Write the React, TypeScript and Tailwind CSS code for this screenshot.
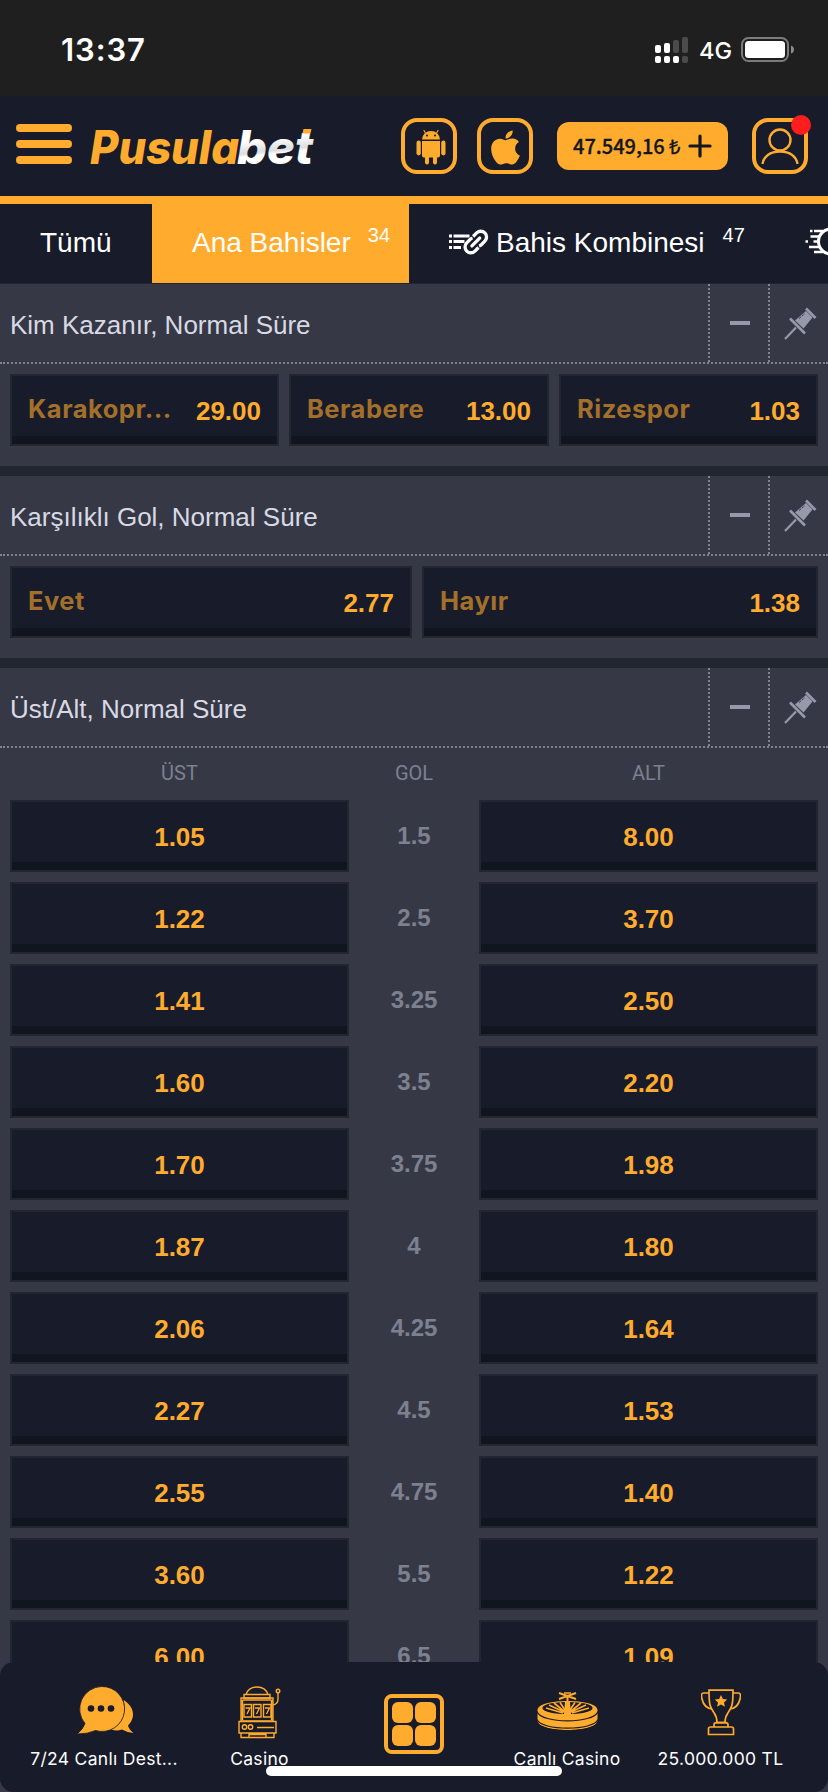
import type { ReactNode } from 'react'
import { FaApple } from 'react-icons/fa'

const winner = [
  { name: 'Karakopr...', odd: '29.00' },
  { name: 'Berabere', odd: '13.00' },
  { name: 'Rizespor', odd: '1.03' },
]

const bothScore = [
  { name: 'Evet', odd: '2.77' },
  { name: 'Hayır', odd: '1.38' },
]

const totals = [
  ['1.05', '1.5', '8.00'],
  ['1.22', '2.5', '3.70'],
  ['1.41', '3.25', '2.50'],
  ['1.60', '3.5', '2.20'],
  ['1.70', '3.75', '1.98'],
  ['1.87', '4', '1.80'],
  ['2.06', '4.25', '1.64'],
  ['2.27', '4.5', '1.53'],
  ['2.55', '4.75', '1.40'],
  ['3.60', '5.5', '1.22'],
  ['6.00', '6.5', '1.09'],
]

function StatusBar() {
  return (
    <div className="flex h-24 shrink-0 items-start bg-[#1f1f1f] text-white font-['Inter',sans-serif]">
      <span className="ml-[61px] mt-[32px] w-[594px] text-[31px] leading-[36px] font-semibold tracking-[0.9px]">13:37</span>
      <svg className="mt-[37px] h-[26px] w-[33px]" viewBox="0 0 33 26">
        <g fill="#fff">
          <rect x="0" y="8" width="6" height="8" rx="2" />
          <rect x="9" y="6" width="6" height="10" rx="2" />
          <rect x="0" y="19" width="6" height="7" rx="2" />
          <rect x="9" y="19" width="6" height="7" rx="2" />
          <rect x="18" y="19" width="6" height="7" rx="2" />
        </g>
        <g fill="#4b4b4b">
          <rect x="18" y="3" width="6" height="13" rx="2" />
          <rect x="27" y="0" width="6" height="16" rx="2" />
          <rect x="27" y="19" width="6" height="7" rx="2" />
        </g>
      </svg>
      <span className="ml-[11px] mt-[37px] w-[42px] text-[23.500px] leading-[28px] font-medium">4G</span>
      <svg className="mt-[37px] h-[25px] w-[54px]" viewBox="0 0 54 25">
        <rect x="1" y="1" width="46" height="23" rx="6.5" fill="none" stroke="#7b7b7b" strokeWidth="2" />
        <rect x="4" y="4" width="40" height="17" rx="3.5" fill="#fff" />
        <path d="M50 8.500q3 1 3 4t-3 4z" fill="#8b8b8b" />
      </svg>
    </div>
  )
}

function Logo() {
  return (
    <svg className="ml-[18px] h-[70px] w-[232px] overflow-visible" viewBox="0 0 232 70">
      <defs>
        <linearGradient id="betFill" x1="0" y1="0" x2="0.15" y2="1">
          <stop offset="0.4" stopColor="#fff" />
          <stop offset="0.62" stopColor="#dcdde0" />
          <stop offset="0.68" stopColor="#fff" />
        </linearGradient>
      </defs>
      <g fontFamily="Inter, sans-serif" fontWeight="800" fontStyle="italic" fontSize="46">
        <text x="0" y="52" fill="#ffab2e" textLength="149" lengthAdjust="spacingAndGlyphs">Pusula</text>
        <text x="147" y="52" fill="url(#betFill)" textLength="76" lengthAdjust="spacingAndGlyphs">bet</text>
      </g>
      <path d="M213.500 17h8l-1 4.500h-8z" fill="#ffab2e" />
    </svg>
  )
}

function Header() {
  return (
    <header className="flex h-[108px] shrink-0 items-start border-b-8 border-[#ffab2e] bg-[#181b2a] pl-4">
      <div className="mt-7 flex w-14 flex-col gap-2">
        <span className="h-2 rounded-full bg-[#ffab2e]" />
        <span className="h-2 rounded-full bg-[#ffab2e]" />
        <span className="h-2 rounded-full bg-[#ffab2e]" />
      </div>
      <div className="mt-4 w-[329px]">
        <Logo />
      </div>
      <div className="mt-[22px] flex items-center">
        <div className="flex size-14 items-center justify-center rounded-[16px] border-4 border-[#ffab2e]">
          <svg className="mt-0.5 ml-1 h-[36px] w-[30px]" viewBox="0 0 30 36" fill="#ffab2e">
            <path d="M6 10.500a9 8.500 0 0 1 18 0z" />
            <path d="M9.500 4L7.700 1M20.500 4l1.800-3" stroke="#ffab2e" strokeWidth="1.100" />
            <circle cx="11" cy="6.600" r="1" fill="#181b2a" />
            <circle cx="19" cy="6.600" r="1" fill="#181b2a" />
            <path d="M6 12h18v14.500a2 2 0 0 1-2 2h-1v5a2 2 0 0 1-4 0v-5h-4v5a2 2 0 0 1-4 0v-5h-1a2 2 0 0 1-2-2z" />
            <rect x="0.500" y="11.500" width="4.300" height="15" rx="2.150" />
            <rect x="25.200" y="11.500" width="4.300" height="15" rx="2.150" />
          </svg>
        </div>
        <div className="ml-5 flex size-14 items-center justify-center rounded-[16px] border-4 border-[#ffab2e]">
          <FaApple className="mt-0.5 size-[39px] text-[#ffab2e]" />
        </div>
        <div className="ml-6 flex h-12 w-[171px] items-center rounded-[12px] bg-[#ffab2e] pl-4 text-[#141722]">
          <span className="w-[115px] whitespace-nowrap font-['Noto_Sans_CJK_SC',sans-serif] text-[20px] font-medium [-webkit-text-stroke:0.3px_#141722]">47.549,16 ₺</span>
          <svg className="size-6" viewBox="0 0 24 24" stroke="#141722" strokeWidth="3.200" strokeLinecap="round">
            <path d="M12 2v20M2 12h20" />
          </svg>
        </div>
        <div className="relative ml-6 flex size-14 items-center justify-center rounded-[16px] border-4 border-[#ffab2e]">
          <svg className="h-[36px] w-[38px]" viewBox="0 0 38 36" fill="none" stroke="#ffab2e" strokeWidth="2.400">
            <circle cx="19" cy="12" r="10.500" />
            <path d="M1.500 36C2.500 28.500 9 23.500 19 23.500S35.500 28.500 36.500 36" />
          </svg>
          <span className="absolute -top-[7px] -right-[7px] size-5 rounded-full bg-[#ff1d1d]" />
        </div>
      </div>
    </header>
  )
}

function ComboIcon() {
  return (
    <svg className="h-[30px] w-[40px] shrink-0" viewBox="0 0 40 30" fill="none" stroke="#fff">
      <path d="M0 9h3M4.500 9h16M0 14.500h3M4.500 14.500h11M0 20.500h3M4.500 20.500h7.500" strokeWidth="3.200" />
      <g transform="translate(-0.200 1.500) rotate(-45 27 13.500)" strokeWidth="3.300">
        <path d="M25 19.300H20a5.800 5.800 0 0 1 0-11.600h5a5.800 5.800 0 0 1 2.500.7" />
        <path d="M29 7.700H34a5.800 5.800 0 0 1 0 11.600h-5a5.800 5.800 0 0 1-2.500-.7" />
        <path d="M21.500 13.500h11" strokeLinecap="round" />
      </g>
    </svg>
  )
}

function Tabs() {
  return (
    <nav className="flex h-20 shrink-0 overflow-hidden border-b border-[#222530] bg-[#181b2a] text-[28px] leading-[32px] whitespace-nowrap text-white">
      <div className="w-[152px] shrink-0 pt-[23px] pl-10">Tümü</div>
      <div className="flex w-[257px] shrink-0 bg-[#ffab2e] pt-[23px] pl-10">
        Ana Bahisler
        <span className="-mt-[5px] ml-[17px] text-[20px] leading-[26px]">34</span>
      </div>
      <div className="flex w-[356px] shrink-0 pt-[23px] pl-10">
        <ComboIcon />
        <span className="ml-[7px]">Bahis Kombinesi</span>
        <span className="-mt-[5px] ml-[18px] text-[20px] leading-[26px]">47</span>
      </div>
      <div className="shrink-0 pt-[23px] pl-10">
        <svg className="h-[30px] w-[44px]" viewBox="0 0 44 30" fill="none" stroke="#fff" strokeWidth="3">
          <circle cx="26" cy="14.500" r="12.500" />
          <path d="M26 7.500v7l5 3M9 4h9M5.500 9.500h9M8.500 14.500h5M4 20h10M9 25h9M5 4h2.500M0.500 14.500H3" strokeWidth="2.600" />
        </svg>
      </div>
    </nav>
  )
}

function PinIcon() {
  return (
    <svg className="h-[33px] w-[33px]" viewBox="0 0 33 33" fill="none" stroke="#9599aa">
      <path d="M1 32L12 20.500" strokeWidth="2.200" />
      <path d="M6 11.500L21 26.500" strokeWidth="2.600" />
      <path d="M22 1.500L31.500 11" strokeWidth="2.600" />
      <path d="M11 13.500L22 4L28.500 10.500L19.500 21.500z" fill="#9599aa" stroke="none" />
      <path d="M15 11.500l6-5" stroke="#363945" strokeWidth="1" strokeDasharray="2.500 1" />
    </svg>
  )
}

function Market({ title, children }: { title: string; children: ReactNode }) {
  return (
    <section className="shrink-0 border-b-[10px] border-[#222631] bg-[#363945]">
      <div className="flex h-20 border-b-2 border-dotted border-[#818391]">
        <h2 className="w-[708px] pt-[25px] pl-[10px] text-[26px] leading-[32px] text-[#d9d9e6]">{title}</h2>
        <div className="w-[60px] border-l-2 border-dotted border-[#818391] pt-[37px] pl-5">
          <div className="h-1 w-5 bg-[#9599aa]" />
        </div>
        <div className="w-[60px] border-l-2 border-dotted border-[#818391] pt-[23px] pl-[14px]">
          <PinIcon />
        </div>
      </div>
      {children}
    </section>
  )
}

function Outcome({ name, odd }: { name: string; odd: string }) {
  return (
    <div className="flex h-[72px] items-start justify-between border-2 border-[#222631] bg-[#181b2a] px-4 pt-[17px] font-bold shadow-[inset_0_-8px_0_#11151f]">
      <span className="font-['Inter',sans-serif] text-[25.500px] leading-[32px] tracking-[0.5px] text-[#a3702c]">{name}</span>
      <span className="pt-[2px] text-[26px] leading-[32px] text-[#ffab2e]">{odd}</span>
    </div>
  )
}

function Price({ value }: { value: string }) {
  return (
    <div className="h-[72px] border-2 border-[#222631] bg-[#181b2a] pt-[19px] text-center text-[26px] leading-[32px] font-bold text-[#ffab2e] shadow-[inset_0_-8px_0_#11151f]">
      {value}
    </div>
  )
}

function ChatIcon() {
  return (
    <svg className="ml-1 h-[49px] w-[58px]" viewBox="0 0 58 49" fill="#ffab2e">
      <path d="M34 43.500C45 38 50 27 46.500 14C58 21 58.500 32 51 39.500q1 4 5.500 7.500Q50 46.500 45 43.500Q40 45.500 34 43.500z" />
      <path d="M24.500 0.500a22.500 22.500 0 1 1-6 44Q11 48 0 48Q6 43.500 8 37.500A22.500 22.500 0 0 1 24.500 0.500z" stroke="#181b2a" strokeWidth="0.800" />
      <g fill="#181b2a">
        <circle cx="14" cy="22.500" r="3.300" />
        <circle cx="24" cy="22.500" r="3.300" />
        <circle cx="34" cy="22.500" r="3.300" />
      </g>
    </svg>
  )
}

function SlotIcon() {
  return (
    <svg className="h-[53px] w-[43px]" viewBox="0 0 43 53" fill="none" stroke="#ffab2e" strokeWidth="1.400">
      <path d="M8 8.500Q10.500 1 19 1t11 7.500M6 8.500h26v3.500H6z" />
      <path d="M3 12h32v23H3zM4.500 14h29M4.500 14v20M33.500 14v20" />
      <path d="M6 18.500h7.500V31H6zM15.500 18.500H23V31h-7.500zM25.500 18.500H33V31h-7.500z" />
      <path d="M7.500 22H12l-3 6M17 22h4.500l-3 6M27 22h4.500l-3 6" />
      <path d="M1 35.500h37v11.500H1zM3 47v4.500h33V47M11 51.500V48.500h17v3M19 41.500h17" />
      <circle cx="6.500" cy="41" r="2.200" />
      <circle cx="12.500" cy="41" r="2.200" />
      <path d="M35 19q5-1 5-6V7" />
      <circle cx="40" cy="5" r="1.800" />
    </svg>
  )
}

function RouletteIcon() {
  return (
    <svg className="h-[41px] w-[61px]" viewBox="0 0 61 41">
      <path d="M0.500 20C0.500 8 60.500 8 60.500 20V31C60.500 43 0.500 43 0.500 31z" fill="#ffab2e" />
      <g fill="none" stroke="#181b2a" strokeWidth="1.200">
        <path d="M0 21.500C4 34 57 34 61 21.500M0 29.500C4 41 57 41 61 29.500M0 32C4 43.500 57 43.500 61 32" />
        <ellipse cx="30.500" cy="18" rx="24.500" ry="5.500" fill="#181b2a" />
      </g>
      <path d="M12 15l15 7M17 13l11 9M23 12.500l6 9M38 12.500l-6 9M44 13l-11 9M49 15l-15 7M9 18l17 5M52 18l-17 5" stroke="#ffab2e" strokeWidth="1.700" />
      <path d="M27 24l1-12h5l1 12z" fill="#ffab2e" />
      <path d="M30.500 5v10M22 3l17 6M39 3l-17 6" stroke="#ffab2e" strokeWidth="2" />
      <path d="M27 3h7M28 13l5-1" stroke="#ffab2e" strokeWidth="1.500" />
    </svg>
  )
}

function TrophyIcon() {
  return (
    <svg className="h-[47px] w-[40px]" viewBox="0 0 40 47" fill="none" stroke="#ffab2e" strokeWidth="1.700">
      <path d="M8 1.200h24c0 15-1 17-5 22.500-2.500 3.500-3 5-3 10h-8c0-5-.5-6.500-3-10C9 18.200 8 16.200 8 1.200z" />
      <path d="M8 4H2.500q-3 0-1.500 6 2 9 10 10M32 4h5.500q3 0 1.500 6-2 9-10 10" />
      <path d="M13 38v-2q0-2.300 2.500-2.300h9Q27 33.700 27 36v2M9.500 38h21q2 0 2 2v5.500h-25V40q0-2 2-2z" />
      <path d="M20 6l1.900 4 4.300.5-3.200 3 .9 4.300L20 15.600l-3.900 2.200.9-4.300-3.200-3 4.300-.5z" fill="#ffab2e" stroke="none" />
    </svg>
  )
}

function BottomNav() {
  return (
    <div className="absolute inset-x-0 bottom-0 bg-[#363945]">
      <nav className="grid h-[130px] grid-cols-[154px_157px_151px_156px_151px] rounded-[14px] bg-[#181b2a] pl-[27px] font-['Inter',sans-serif] text-[17.500px] leading-[24px] tracking-[0.300px] whitespace-nowrap text-white">
        <div className="flex flex-col items-center pt-6">
          <div className="h-[61px]"><ChatIcon /></div>
          7/24 Canlı Dest...
        </div>
        <div className="flex flex-col items-center pt-6">
          <div className="h-[61px]"><SlotIcon /></div>
          Casino
        </div>
        <div className="flex justify-center pt-8">
          <div className="grid size-[60px] grid-cols-2 gap-0.5 rounded-[8px] border-4 border-[#ffab2e] p-1">
            <span className="rounded-[6px] bg-[#ffab2e]" />
            <span className="rounded-[6px] bg-[#ffab2e]" />
            <span className="rounded-[6px] bg-[#ffab2e]" />
            <span className="rounded-[6px] bg-[#ffab2e]" />
          </div>
        </div>
        <div className="flex flex-col items-center pt-7">
          <div className="h-[57px]"><RouletteIcon /></div>
          Canlı Casino
        </div>
        <div className="flex flex-col items-center pt-[27px]">
          <div className="h-[58px]"><TrophyIcon /></div>
          25.000.000 TL
        </div>
      </nav>
      {/* Home indicator */}
      <div className="absolute bottom-4 left-[266px] h-[10px] w-[296px] rounded-full bg-white" />
    </div>
  )
}

export default function App() {
  return (
    <div className="relative flex h-[1792px] w-[828px] flex-col overflow-hidden bg-[#363945] font-['Liberation_Sans',Arial,sans-serif]">
      <StatusBar />
      <Header />
      <Tabs />
      <Market title="Kim Kazanır, Normal Süre">
        <div className="grid grid-cols-[269px_260px_259px] gap-[10px] px-[10px] pt-[10px] pb-5">
          {winner.map((o) => <Outcome key={o.name} name={o.name} odd={o.odd} />)}
        </div>
      </Market>
      <Market title="Karşılıklı Gol, Normal Süre">
        <div className="grid grid-cols-[402px_396px] gap-[10px] px-[10px] pt-[10px] pb-5">
          {bothScore.map((o) => <Outcome key={o.name} name={o.name} odd={o.odd} />)}
        </div>
      </Market>
      <Market title="Üst/Alt, Normal Süre">
        <div className="grid grid-cols-[339px_130px_339px] px-[10px] pt-[12px] pb-[14px] text-center font-['Roboto',sans-serif] text-[20px] leading-[26px] text-[#7d8090]">
          <span>ÜST</span>
          <span>GOL</span>
          <span>ALT</span>
        </div>
        <div className="flex flex-col gap-[10px] px-[10px]">
          {totals.map(([over, line, under]) => (
            <div key={line} className="grid grid-cols-[339px_130px_339px]">
              <Price value={over} />
              <span className="pt-[20px] text-center text-[24px] leading-[32px] font-bold text-[#7d8090]">{line}</span>
              <Price value={under} />
            </div>
          ))}
        </div>
      </Market>
      <BottomNav />
    </div>
  )
}
